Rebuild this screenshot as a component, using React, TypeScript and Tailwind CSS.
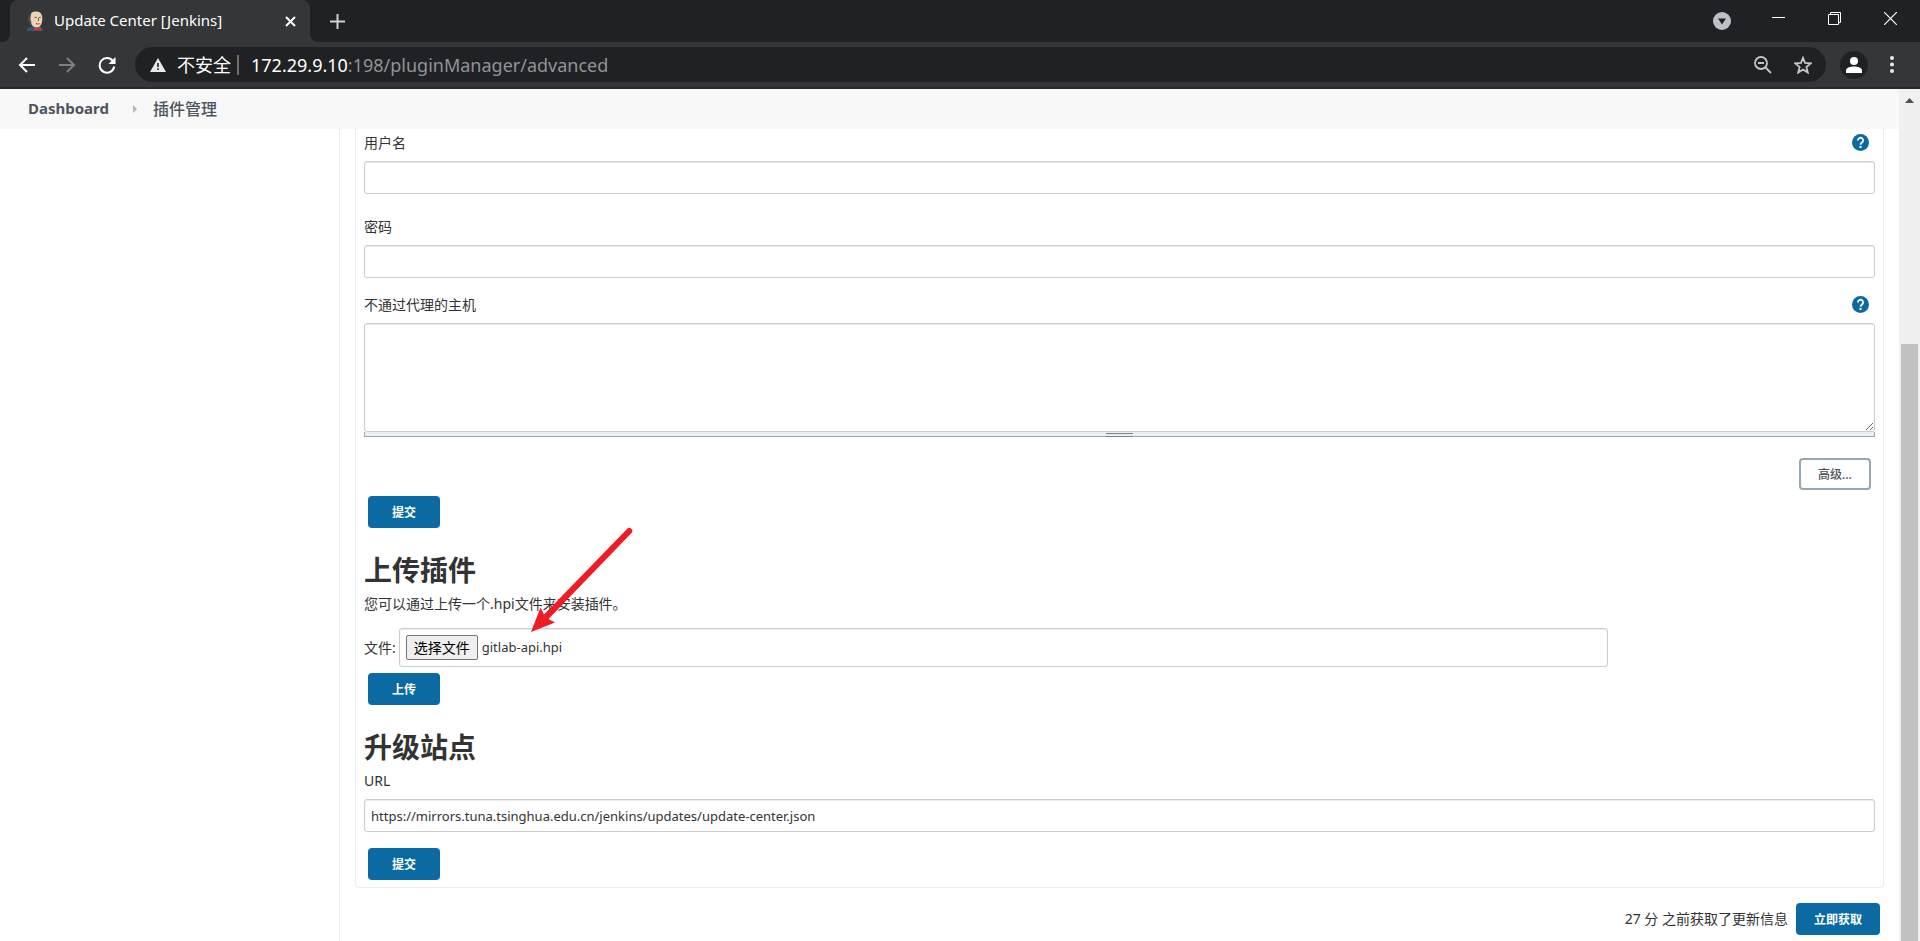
import { useRef, useState } from "react";

interface TextFieldProps {
  id: string;
  label: string;
  type?: string;
  defaultValue?: string;
  help?: boolean;
}

const HelpButton = ({ label }: { label: string }) => (
  <button type="button" aria-label={`Help: ${label}`} className="mr-1.5 mb-0.5 cursor-pointer">
    <svg width="17" height="17" viewBox="0 0 17 17" fill="none">
      <circle cx="8.5" cy="8.5" r="8.5" fill="#0b6aa2" />
      <path d="M5.9 6.4a2.6 2.6 0 1 1 4.1 2.1c-.9.7-1.5 1.1-1.5 2.2" stroke="#fff" strokeWidth="1.8" />
      <rect x="7.5" y="12" width="2" height="2" fill="#fff" />
    </svg>
  </button>
);

const FieldLabel = ({ id, label, help }: { id: string; label: string; help?: boolean }) => (
  <div className="flex items-center justify-between h-5">
    <label htmlFor={id}>{label}</label>
    {help && <HelpButton label={label} />}
  </div>
);

const TextField = ({ id, label, type = "text", defaultValue = "", help }: TextFieldProps) => (
  <div className="flex flex-col gap-2">
    <FieldLabel id={id} label={label} help={help} />
    <input
      id={id}
      type={type}
      defaultValue={defaultValue}
      className="w-full h-[33px] px-1.5 text-[13px] bg-white border border-[#ccc] rounded-[3px] shadow-[inset_0_1px_1px_rgba(0,0,0,0.08)] focus:outline-none focus:border-[#0b6aa2]"
    />
  </div>
);

const PrimaryButton = ({ children, wide }: { children: string; wide?: boolean }) => (
  <button
    type="button"
    className={`${wide ? "w-[84px]" : "w-[72px]"} h-8 pt-0.5 bg-[#0b6aa2] text-white text-xs font-bold rounded-sm hover:bg-[#095683] cursor-pointer`}
  >
    {children}
  </button>
);

const TabStrip = () => (
  <div className="flex h-[42px] bg-[#202124] text-white">
    <div className="relative flex items-center w-[300px] ml-2.5 pl-4 pr-2.5 bg-[#35363a] rounded-t-lg">
      <svg className="absolute -left-2 bottom-0" width="8" height="8" viewBox="0 0 8 8" fill="#35363a">
        <path d="M8 0v8H0a8 8 0 0 0 8-8z" />
      </svg>
      <svg className="absolute -right-2 bottom-0" width="8" height="8" viewBox="0 0 8 8" fill="#35363a">
        <path d="M0 0v8h8a8 8 0 0 1-8-8z" />
      </svg>
      <svg width="18" height="20" viewBox="0 0 18 20">
        <path d="M1 20c0-2.500 1.500-4 4.500-4.500h7c3.500.3 4.500 2 4.500 4.500z" fill="#2f5672" />
        <path d="M4 4C5 1 8 0 11 .6c4 .6 5.500 3.400 5.300 7.400-.2 5.500-2.300 8.500-5.300 8.500s-5.500-1.500-6.200-5C3 11 2.500 6 4 4z" fill="#edd2b3" />
        <path d="M5.500 1.500C2 3 1 8 2.800 11l2 3 .6-3-1-2.500.3-3.500z" fill="#544640" />
        <path d="M8.500 6.400h2.300M12.800 6.400h2M12.400 7v3M10 12.600q1.800 1 3.500 0" stroke="#6b554a" strokeWidth="1" fill="none" />
        <path d="M8 16l3.500 1.500L15 16v4l-3.500-1.300L8 20z" fill="#e0322c" />
      </svg>
      <span className="ml-2.5 text-[15px]">Update Center [Jenkins]</span>
      <button type="button" aria-label="Close tab" className="ml-auto p-1 cursor-pointer">
        <svg width="11" height="11" viewBox="0 0 11 11" stroke="#fff" strokeWidth="2">
          <path d="M1 1l9 9M10 1l-9 9" />
        </svg>
      </button>
    </div>
    <button type="button" aria-label="New tab" className="ml-5 cursor-pointer">
      <svg width="15" height="15" viewBox="0 0 15 15" stroke="#d0d1d4" strokeWidth="2">
        <path d="M7.500 0v15M0 7.500h15" />
      </svg>
    </button>
    <div className="flex ml-auto pr-0.5">
      <button type="button" aria-label="Search tabs" className="flex items-center justify-center w-10 mr-2 cursor-pointer">
        <svg width="18" height="18" viewBox="0 0 18 18">
          <circle cx="9" cy="9" r="9" fill="#bdc1c6" />
          <path d="M5 6.500h8L9 12.500z" fill="#202124" />
        </svg>
      </button>
      <button type="button" aria-label="Minimize" className="flex justify-center w-14 pt-3 cursor-pointer">
        <svg width="13" height="13" viewBox="0 0 13 13" stroke="#fff">
          <path d="M0 5.500h13" />
        </svg>
      </button>
      <button type="button" aria-label="Restore" className="flex justify-center w-14 pt-3 cursor-pointer">
        <svg width="13" height="13" viewBox="0 0 13 13" stroke="#fff" fill="none">
          <path d="M.5 2.500h10v10H.5zM2.500 2.500v-2h10v10h-2" />
        </svg>
      </button>
      <button type="button" aria-label="Close" className="flex justify-center w-14 pt-3 cursor-pointer">
        <svg width="13" height="13" viewBox="0 0 13 13" stroke="#fff" strokeWidth="1.200">
          <path d="M0 0l13 13M13 0L0 13" />
        </svg>
      </button>
    </div>
  </div>
);

const AddressBar = () => (
  <div className="flex items-center h-[47px] pl-[15px] pr-4 bg-[#35363a] border-b-2 border-[#28292c]">
    <button type="button" aria-label="Back" className="w-6 flex justify-center cursor-pointer">
      <svg width="18" height="16" viewBox="0 0 18 16" stroke="#fff" strokeWidth="2" fill="none">
        <path d="M17 8H2M9 1L2 8l7 7" />
      </svg>
    </button>
    <button type="button" aria-label="Forward" className="w-6 ml-4 flex justify-center cursor-pointer">
      <svg width="18" height="16" viewBox="0 0 18 16" stroke="#7f8084" strokeWidth="2" fill="none">
        <path d="M1 8h15M9 1l7 7-7 7" />
      </svg>
    </button>
    <button type="button" aria-label="Reload" className="w-6 ml-4 flex justify-center cursor-pointer">
      <svg width="18" height="18" viewBox="0 0 18 18" fill="none">
        <path d="M15 5.200A7.300 7.300 0 1 0 16.200 10.500" stroke="#fff" strokeWidth="2" />
        <path d="M17.500 1v7h-7z" fill="#fff" />
      </svg>
    </button>
    <div className="flex flex-1 items-center h-[35px] ml-4 pl-[15px] pr-3.5 bg-[#202124] rounded-full text-lg">
      <svg width="16" height="14" viewBox="0 0 16 14">
        <path d="M8 0l8 14H0z" fill="#e8eaed" />
        <path d="M7.200 5h1.600v4H7.200zM7.200 10.300h1.600V12H7.200z" fill="#202124" />
      </svg>
      <span className="ml-[11px] text-white">不安全</span>
      <span className="w-0.5 h-5 ml-1.5 mr-3 bg-[#6f7073]" />
      <span className="text-[#8f9499]">
        <span className="text-white">172.29.9.10</span>:198/pluginManager/advanced
      </span>
      <button type="button" aria-label="Zoom" className="ml-auto cursor-pointer">
        <svg width="18" height="18" viewBox="0 0 18 18" stroke="#c4c5c8" strokeWidth="1.800" fill="none">
          <circle cx="7" cy="7" r="6" />
          <path d="M4 7h6M11.500 11.500l5.500 5.500" />
        </svg>
      </button>
      <button type="button" aria-label="Bookmark" className="ml-[22px] cursor-pointer">
        <svg width="18" height="18" viewBox="0 0 18 18" stroke="#c4c5c8" strokeWidth="1.800" fill="none">
          <path d="M9 1.800l2 5.100 5.800.4-4.400 3.700 1.400 5.600L9 13.500l-4.800 3.100L5.600 11 1.200 7.300 7 6.900z" />
        </svg>
      </button>
    </div>
    <button type="button" aria-label="Profile" className="flex items-center justify-center size-7 ml-3.5 rounded-full bg-[#202124] cursor-pointer">
      <svg width="16" height="16" viewBox="0 0 16 16" fill="#fff">
        <circle cx="8" cy="4" r="4" />
        <path d="M0 16v-2.500C0 10.800 4 9.500 8 9.500s8 1.300 8 4V16z" />
      </svg>
    </button>
    <button type="button" aria-label="Menu" className="flex justify-center w-6 ml-3 cursor-pointer">
      <svg width="4" height="17" viewBox="0 0 4 17" fill="#e8eaed">
        <circle cx="2" cy="2" r="2" />
        <circle cx="2" cy="8.500" r="2" />
        <circle cx="2" cy="15" r="2" />
      </svg>
    </button>
  </div>
);

const Breadcrumbs = () => (
  <nav className="flex items-center h-10 pl-7 bg-[#f8f8f8] text-[#4d545d]">
    <a href="#dashboard" className="text-[15px] font-bold">Dashboard</a>
    <svg className="ml-6 mr-4" width="4" height="8" viewBox="0 0 4 8" fill="#b5b5b5">
      <path d="M0 0l4 4-4 4z" />
    </svg>
    <a href="#plugins" className="text-base font-medium">插件管理</a>
  </nav>
);

const UploadForm = () => {
  const fileInput = useRef<HTMLInputElement>(null);
  const [fileName, setFileName] = useState("gitlab-api.hpi");

  return (
    <div className="flex items-center">
      <label htmlFor="plugin-file">文件:</label>
      <div className="flex items-center w-4/5 h-[39px] ml-[3px] px-1.5 border border-[#ccc] rounded-[3px] shadow-[inset_0_1px_1px_rgba(0,0,0,0.08)]">
        <input
          id="plugin-file"
          ref={fileInput}
          type="file"
          accept=".hpi"
          className="sr-only"
          onChange={(e) => setFileName(e.target.files?.[0]?.name ?? "")}
        />
        <button
          type="button"
          onClick={() => fileInput.current?.click()}
          className="w-[72px] h-[25px] bg-[#efefef] border border-[#767676] rounded-xs text-black cursor-pointer"
        >
          选择文件
        </button>
        <span className="ml-1 text-[13px]">{fileName}</span>
      </div>
    </div>
  );
};

const Scrollbar = () => (
  <div className="flex flex-col items-center w-[21px] shrink-0 bg-[#f0f0f0]">
    <svg className="mt-[9px]" width="9" height="5" viewBox="0 0 9 5" fill="#505050">
      <path d="M0 5l4.500-5L9 5z" />
    </svg>
    <div className="w-[17px] mt-[241px] flex-1 bg-[#c1c1c1]" />
  </div>
);

const App = () => {
  return (
    <div className="flex flex-col min-h-screen bg-white text-sm text-[#333] font-['Noto_Sans','Noto_Sans_CJK_SC',sans-serif]">
      <TabStrip />
      <AddressBar />
      <div className="flex flex-1">
        <div className="flex flex-col flex-1 min-w-0">
          <Breadcrumbs />
          <div className="flex flex-1">
            <aside className="w-[340px] shrink-0 border-r border-[#eee]" />
            <main className="flex-1 min-w-0 px-[15px]">
              <div className="relative px-2 pb-[7px] border border-t-0 border-[#eaeeee] rounded-b-sm">
                <div className="pt-1">
                  <TextField id="username" label="用户名" help />
                </div>
                <div className="mt-[23px]">
                  <TextField id="password" label="密码" type="password" />
                </div>
                <div className="flex flex-col gap-2 mt-[17px]">
                  <FieldLabel id="no-proxy" label="不通过代理的主机" help />
                  <div>
                    <textarea
                      id="no-proxy"
                      className="block w-full h-[109px] p-1.5 border border-[#ccc] rounded-[3px] shadow-[inset_0_1px_1px_rgba(0,0,0,0.08)] focus:outline-none focus:border-[#0b6aa2]"
                    />
                    <div className="flex justify-center h-[5px] bg-[#e9eff2] border border-t-0 border-[#98a7b1]">
                      <div className="w-[27px] h-1 mt-px border-y border-[#7d8587]" />
                    </div>
                  </div>
                </div>
                <div className="flex justify-end mt-[21px] pr-1">
                  <button
                    type="button"
                    className="w-[72px] h-8 pt-0.5 border-2 border-[#98a6b2] rounded-sm text-xs font-medium text-[#4d545d] cursor-pointer"
                  >
                    高级...
                  </button>
                </div>
                <div className="mt-1.5 pl-1">
                  <PrimaryButton>提交</PrimaryButton>
                </div>

                <h1 className="mt-[22px] text-[28px] leading-10 font-bold">上传插件</h1>
                <p className="mt-1 leading-5">您可以通过上传一个.hpi文件来安装插件。</p>
                <div className="mt-3.5">
                  <UploadForm />
                </div>
                <div className="mt-1.5 pl-1">
                  <PrimaryButton>上传</PrimaryButton>
                </div>

                <h1 className="mt-[22px] text-[28px] leading-10 font-bold">升级站点</h1>
                <div className="mt-1">
                  <TextField
                    id="site-url"
                    label="URL"
                    defaultValue="https://mirrors.tuna.tsinghua.edu.cn/jenkins/updates/update-center.json"
                  />
                </div>
                <div className="mt-4 pl-1">
                  <PrimaryButton>提交</PrimaryButton>
                </div>

                {/* arrow pointing at the chosen file */}
                <svg
                  className="absolute left-[175px] top-[398px] pointer-events-none"
                  width="105"
                  height="108"
                  viewBox="0 0 105 108"
                  fill="#ee1c24"
                >
                  <path d="M0 105L9.500 80.500L13 87.500L96 2A2.800 2.800 0 0 1 100.500 6L17.500 92L24 95.500z" />
                </svg>
              </div>
              <div className="flex items-center justify-end gap-2 mt-[15px] mb-1.5 pr-1">
                <span>27 分 之前获取了更新信息</span>
                <PrimaryButton wide>立即获取</PrimaryButton>
              </div>
            </main>
          </div>
        </div>
        <Scrollbar />
      </div>
    </div>
  );
};

export default App;
